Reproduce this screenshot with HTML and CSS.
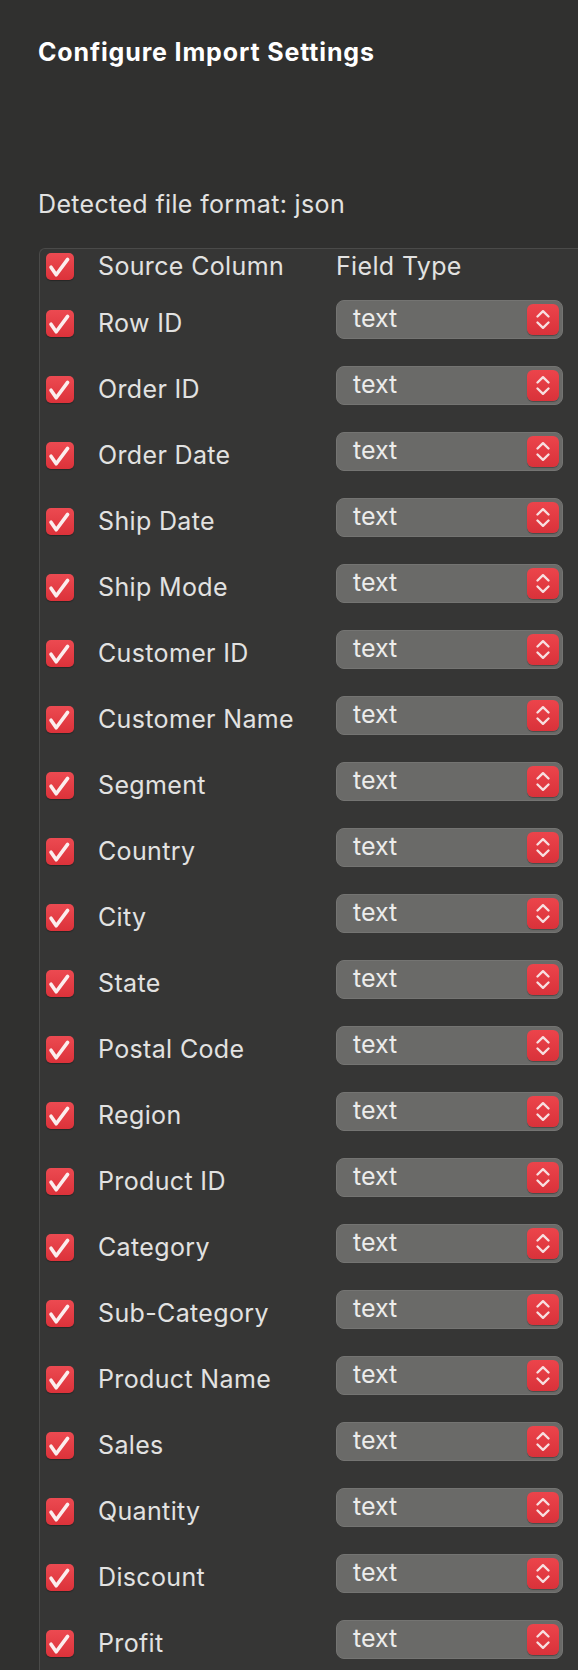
FILE: index.html
```html
<!DOCTYPE html>
<html lang="en">
 <head>
   <meta charset="UTF-8">
   <meta name="viewport" content="width=device-width, initial-scale=1.0">
   <title>Configure Import Settings</title>
   <link rel="stylesheet" href="styles.css">
 </head>
 <body>
  <svg class="icon-defs" width="0" height="0">
    <symbol id="check" viewBox="0 0 28 27">
      <path d="M5 14.2 L10.2 21.8 L21.6 6.4" fill="none" stroke="currentColor" stroke-width="3.6" stroke-linecap="round" stroke-linejoin="round"/>
    </symbol>
    <symbol id="updown" viewBox="0 0 32 31">
      <path d="M10.5 12.5 L16 7.2 L21.5 12.5 M10.5 18.5 L16 23.8 L21.5 18.5" fill="none" stroke="currentColor" stroke-width="2.4" stroke-linecap="round" stroke-linejoin="round"/>
    </symbol>
  </svg>

  <div class="panel">
    <h1 class="title">Configure Import Settings</h1>
    <p class="format">Detected file format: json</p>

    <div class="columns">
      <div class="row header">
        <span class="checkbox"><svg><use href="#check"/></svg></span>
        <span class="col-name">Source Column</span>
        <span class="col-type">Field Type</span>
      </div>

      <div class="row">
        <span class="checkbox"><svg><use href="#check"/></svg></span>
        <span class="col-name">Row ID</span>
        <div class="select"><span>text</span><span class="stepper"><svg><use href="#updown"/></svg></span></div>
      </div>
      <div class="row">
        <span class="checkbox"><svg><use href="#check"/></svg></span>
        <span class="col-name">Order ID</span>
        <div class="select"><span>text</span><span class="stepper"><svg><use href="#updown"/></svg></span></div>
      </div>
      <div class="row">
        <span class="checkbox"><svg><use href="#check"/></svg></span>
        <span class="col-name">Order Date</span>
        <div class="select"><span>text</span><span class="stepper"><svg><use href="#updown"/></svg></span></div>
      </div>
      <div class="row">
        <span class="checkbox"><svg><use href="#check"/></svg></span>
        <span class="col-name">Ship Date</span>
        <div class="select"><span>text</span><span class="stepper"><svg><use href="#updown"/></svg></span></div>
      </div>
      <div class="row">
        <span class="checkbox"><svg><use href="#check"/></svg></span>
        <span class="col-name">Ship Mode</span>
        <div class="select"><span>text</span><span class="stepper"><svg><use href="#updown"/></svg></span></div>
      </div>
      <div class="row">
        <span class="checkbox"><svg><use href="#check"/></svg></span>
        <span class="col-name">Customer ID</span>
        <div class="select"><span>text</span><span class="stepper"><svg><use href="#updown"/></svg></span></div>
      </div>
      <div class="row">
        <span class="checkbox"><svg><use href="#check"/></svg></span>
        <span class="col-name">Customer Name</span>
        <div class="select"><span>text</span><span class="stepper"><svg><use href="#updown"/></svg></span></div>
      </div>
      <div class="row">
        <span class="checkbox"><svg><use href="#check"/></svg></span>
        <span class="col-name">Segment</span>
        <div class="select"><span>text</span><span class="stepper"><svg><use href="#updown"/></svg></span></div>
      </div>
      <div class="row">
        <span class="checkbox"><svg><use href="#check"/></svg></span>
        <span class="col-name">Country</span>
        <div class="select"><span>text</span><span class="stepper"><svg><use href="#updown"/></svg></span></div>
      </div>
      <div class="row">
        <span class="checkbox"><svg><use href="#check"/></svg></span>
        <span class="col-name">City</span>
        <div class="select"><span>text</span><span class="stepper"><svg><use href="#updown"/></svg></span></div>
      </div>
      <div class="row">
        <span class="checkbox"><svg><use href="#check"/></svg></span>
        <span class="col-name">State</span>
        <div class="select"><span>text</span><span class="stepper"><svg><use href="#updown"/></svg></span></div>
      </div>
      <div class="row">
        <span class="checkbox"><svg><use href="#check"/></svg></span>
        <span class="col-name">Postal Code</span>
        <div class="select"><span>text</span><span class="stepper"><svg><use href="#updown"/></svg></span></div>
      </div>
      <div class="row">
        <span class="checkbox"><svg><use href="#check"/></svg></span>
        <span class="col-name">Region</span>
        <div class="select"><span>text</span><span class="stepper"><svg><use href="#updown"/></svg></span></div>
      </div>
      <div class="row">
        <span class="checkbox"><svg><use href="#check"/></svg></span>
        <span class="col-name">Product ID</span>
        <div class="select"><span>text</span><span class="stepper"><svg><use href="#updown"/></svg></span></div>
      </div>
      <div class="row">
        <span class="checkbox"><svg><use href="#check"/></svg></span>
        <span class="col-name">Category</span>
        <div class="select"><span>text</span><span class="stepper"><svg><use href="#updown"/></svg></span></div>
      </div>
      <div class="row">
        <span class="checkbox"><svg><use href="#check"/></svg></span>
        <span class="col-name">Sub-Category</span>
        <div class="select"><span>text</span><span class="stepper"><svg><use href="#updown"/></svg></span></div>
      </div>
      <div class="row">
        <span class="checkbox"><svg><use href="#check"/></svg></span>
        <span class="col-name">Product Name</span>
        <div class="select"><span>text</span><span class="stepper"><svg><use href="#updown"/></svg></span></div>
      </div>
      <div class="row">
        <span class="checkbox"><svg><use href="#check"/></svg></span>
        <span class="col-name">Sales</span>
        <div class="select"><span>text</span><span class="stepper"><svg><use href="#updown"/></svg></span></div>
      </div>
      <div class="row">
        <span class="checkbox"><svg><use href="#check"/></svg></span>
        <span class="col-name">Quantity</span>
        <div class="select"><span>text</span><span class="stepper"><svg><use href="#updown"/></svg></span></div>
      </div>
      <div class="row">
        <span class="checkbox"><svg><use href="#check"/></svg></span>
        <span class="col-name">Discount</span>
        <div class="select"><span>text</span><span class="stepper"><svg><use href="#updown"/></svg></span></div>
      </div>
      <div class="row">
        <span class="checkbox"><svg><use href="#check"/></svg></span>
        <span class="col-name">Profit</span>
        <div class="select"><span>text</span><span class="stepper"><svg><use href="#updown"/></svg></span></div>
      </div>
    </div>
  </div>
 </body>
</html>
```

FILE: styles.css
```css
html,
body {
    margin: 0;
    padding: 0;
    height: 1670px;
    overflow: hidden;
    background-color: #30302f;
}

body {
    font-family: Inter, "Noto Sans", sans-serif;
    color: #e2e2e1;
    letter-spacing: 0.35px;
}

/* hidden holder for the shared icons */
.icon-defs {
    position: absolute;
    width: 0;
    height: 0;
}

.panel {
    padding-left: 38px;
}

.title {
    margin: 0;
    padding-top: 37px;
    font-size: 25px;
    line-height: 30px;
    font-weight: 700;
    letter-spacing: 0.85px;
    color: #ffffff;
}

.format {
    margin: 122px 0 0 0;
    font-size: 25px;
    line-height: 30px;
}

/* the column list, it runs on past the right and bottom edge */
.columns {
    margin: 29px 0 0 1px;
    width: 539px;
    background-color: #363635;
    border: 1px solid #4a4a49;
    border-right: none;
    border-radius: 6px 0 0 0;
}

.row {
    display: flex;
    align-items: center;
    height: 66px;
    padding-left: 6px;
    font-size: 25px;
}

.row.header {
    box-sizing: border-box;
    height: 41px;
    padding-bottom: 7px;
}

.checkbox {
    flex: none;
    display: flex;
    width: 28px;
    height: 27px;
    margin-right: 24px;
    border-radius: 5px;
    background: linear-gradient(#ec4a51, #dc323a);
    box-shadow: 0 1px 1px rgba(0, 0, 0, 0.3);
    color: #fbeeee;
}

.checkbox svg {
    width: 28px;
    height: 27px;
}

.col-name {
    flex: none;
    width: 238px;
}

.select {
    flex: none;
    box-sizing: border-box;
    display: flex;
    align-items: center;
    justify-content: space-between;
    width: 227px;
    height: 39px;
    margin-bottom: 7px;
    padding: 0 3px 0 16px;
    background-color: #6a6a68;
    border: 1px solid #747472;
    border-radius: 8px;
    color: #ececeb;
    line-height: 1;
    letter-spacing: 0;
}

.select > span:first-child {
    margin-top: -2px;
}

.stepper {
    display: flex;
    width: 32px;
    height: 31px;
    border-radius: 6px;
    background: linear-gradient(#ec444b, #d9323a);
    box-shadow: 0 1px 1px rgba(0, 0, 0, 0.3);
    color: #f7dfe0;
}

.stepper svg {
    width: 32px;
    height: 31px;
}
```
